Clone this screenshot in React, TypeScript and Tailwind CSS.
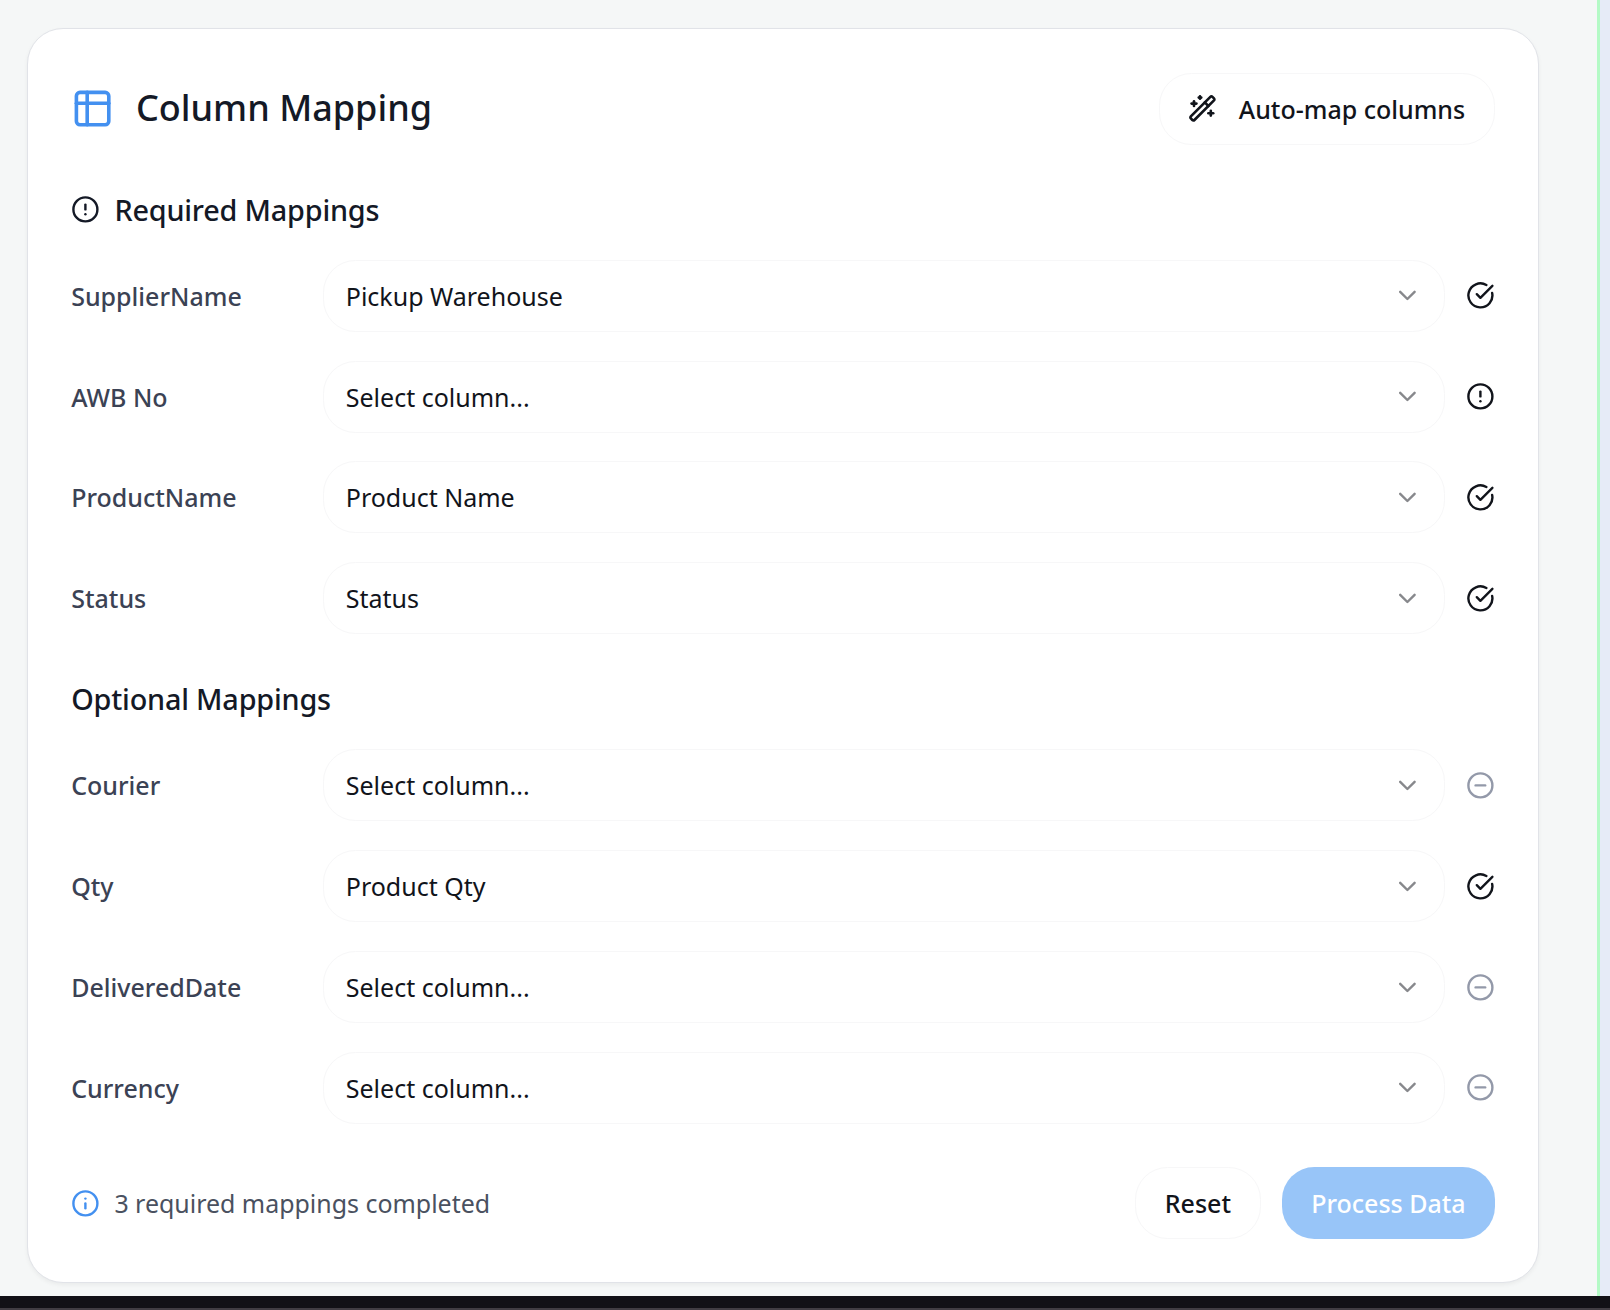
import type { ReactNode } from "react";
import { ChevronDown, CircleAlert, CircleCheckBig, CircleMinus, Info, WandSparkles } from "lucide-react";

type Status = "done" | "missing" | "skipped";

interface Mapping {
  label: string;
  value: string;
  status: Status;
}

const PLACEHOLDER = "Select column...";

const required: Mapping[] = [
  { label: "SupplierName", value: "Pickup Warehouse", status: "done" },
  { label: "AWB No", value: PLACEHOLDER, status: "missing" },
  { label: "ProductName", value: "Product Name", status: "done" },
  { label: "Status", value: "Status", status: "done" },
];

const optional: Mapping[] = [
  { label: "Courier", value: PLACEHOLDER, status: "skipped" },
  { label: "Qty", value: "Product Qty", status: "done" },
  { label: "DeliveredDate", value: PLACEHOLDER, status: "skipped" },
  { label: "Currency", value: PLACEHOLDER, status: "skipped" },
];

function TableIcon() {
  return (
    <svg
      viewBox="0 0 24 24"
      fill="none"
      stroke="currentColor"
      strokeWidth="2"
      strokeLinecap="round"
      strokeLinejoin="round"
      className="size-[43.2px] text-[#4390f0]"
    >
      <rect x="3" y="3" width="18" height="18" rx="2" />
      <path d="M9 3v18" />
      <path d="M3 9h18" />
    </svg>
  );
}

function StatusIcon({ status }: { status: Status }) {
  if (status === "done") return <CircleCheckBig className="size-[28.8px] shrink-0 text-[#11141b]" />;
  if (status === "missing") return <CircleAlert className="size-[28.8px] shrink-0 text-[#11141b]" />;
  return <CircleMinus className="size-[28.8px] shrink-0 text-[#9399a9]" />;
}

function MappingRow({ label, value, status }: Mapping) {
  return (
    <div className="flex items-center gap-[21.6px]">
      <span className="w-[230.4px] shrink-0 text-[25px] leading-[36px] font-medium text-[#3b4254]">{label}</span>
      <button className="flex h-[72px] flex-1 items-center justify-between rounded-[32.4px] border border-[#f7f7f8] px-[21.6px] text-[25px] leading-[36px] text-[#11141b]">
        <span>{value}</span>
        <ChevronDown className="size-[28.8px] opacity-50" />
      </button>
      <StatusIcon status={status} />
    </div>
  );
}

function Section({ title, icon, rows }: { title: string; icon?: ReactNode; rows: Mapping[] }) {
  return (
    <section className="flex flex-col gap-[28.8px]">
      <h3 className="flex items-center gap-[14.4px] text-[28.8px] leading-[43.2px] font-medium tracking-[-0.19px] text-[#141926]">
        {icon}
        {title}
      </h3>
      {rows.map((row) => (
        <MappingRow key={row.label} {...row} />
      ))}
    </section>
  );
}

export default function App() {
  return (
    <div className="flex h-[1310px] w-[1610px] flex-col overflow-hidden font-['Noto_Sans',sans-serif]">
      <div className="flex h-[1296px] shrink-0">
        <main className="w-[1597px] bg-[#f5f7f7] pt-[28.4px] pl-[27px]">
          <div className="flex w-[1512.2px] flex-col gap-[43.2px] rounded-[36px] border border-[#e1e3e8] bg-white p-[43.2px] shadow-[0_2px_4px_rgba(0,0,0,0.05)]">
            <header className="flex items-center justify-between">
              <div className="flex items-center gap-[21.6px]">
                <TableIcon />
                <h2 className="text-[36px] leading-[50.4px] font-medium text-[#141926]">Column Mapping</h2>
              </div>
              <button className="flex h-[72px] items-center gap-[21.6px] rounded-[32.4px] border border-[#f7f7f8] px-[28.8px] text-[25px] leading-[36px] font-medium text-[#11141b]">
                <WandSparkles className="size-[28.8px]" strokeWidth={2.2} />
                Auto-map columns
              </button>
            </header>
            <Section
              title="Required Mappings"
              icon={<CircleAlert className="size-[28.8px]" />}
              rows={required}
            />
            <Section title="Optional Mappings" rows={optional} />
            <footer className="flex items-center justify-between">
              <p className="flex items-center gap-[14.4px] text-[24.95px] leading-[36px] text-[#4a5160]">
                <Info className="size-[28.8px] text-[#4390f0]" />
                3 required mappings completed
              </p>
              <div className="flex gap-[21px]">
                <button className="h-[72px] rounded-[32.4px] border border-[#f7f7f8] px-[28.8px] text-[25px] leading-[36px] font-medium text-[#11141b]">
                  Reset
                </button>
                <button className="h-[72px] w-[213.2px] rounded-[32.4px] bg-[#98c5f8] text-[25px] leading-[36px] font-medium text-white">
                  Process Data
                </button>
              </div>
            </footer>
          </div>
        </main>
        <div className="w-[3px] bg-[#b4fac6]" />
        <div className="flex-1 bg-[#e6ebf7]" />
      </div>
      <div className="h-[12px] shrink-0 bg-[#121116]" />
      <div className="h-[2px] shrink-0 bg-[#413d43]" />
    </div>
  );
}
